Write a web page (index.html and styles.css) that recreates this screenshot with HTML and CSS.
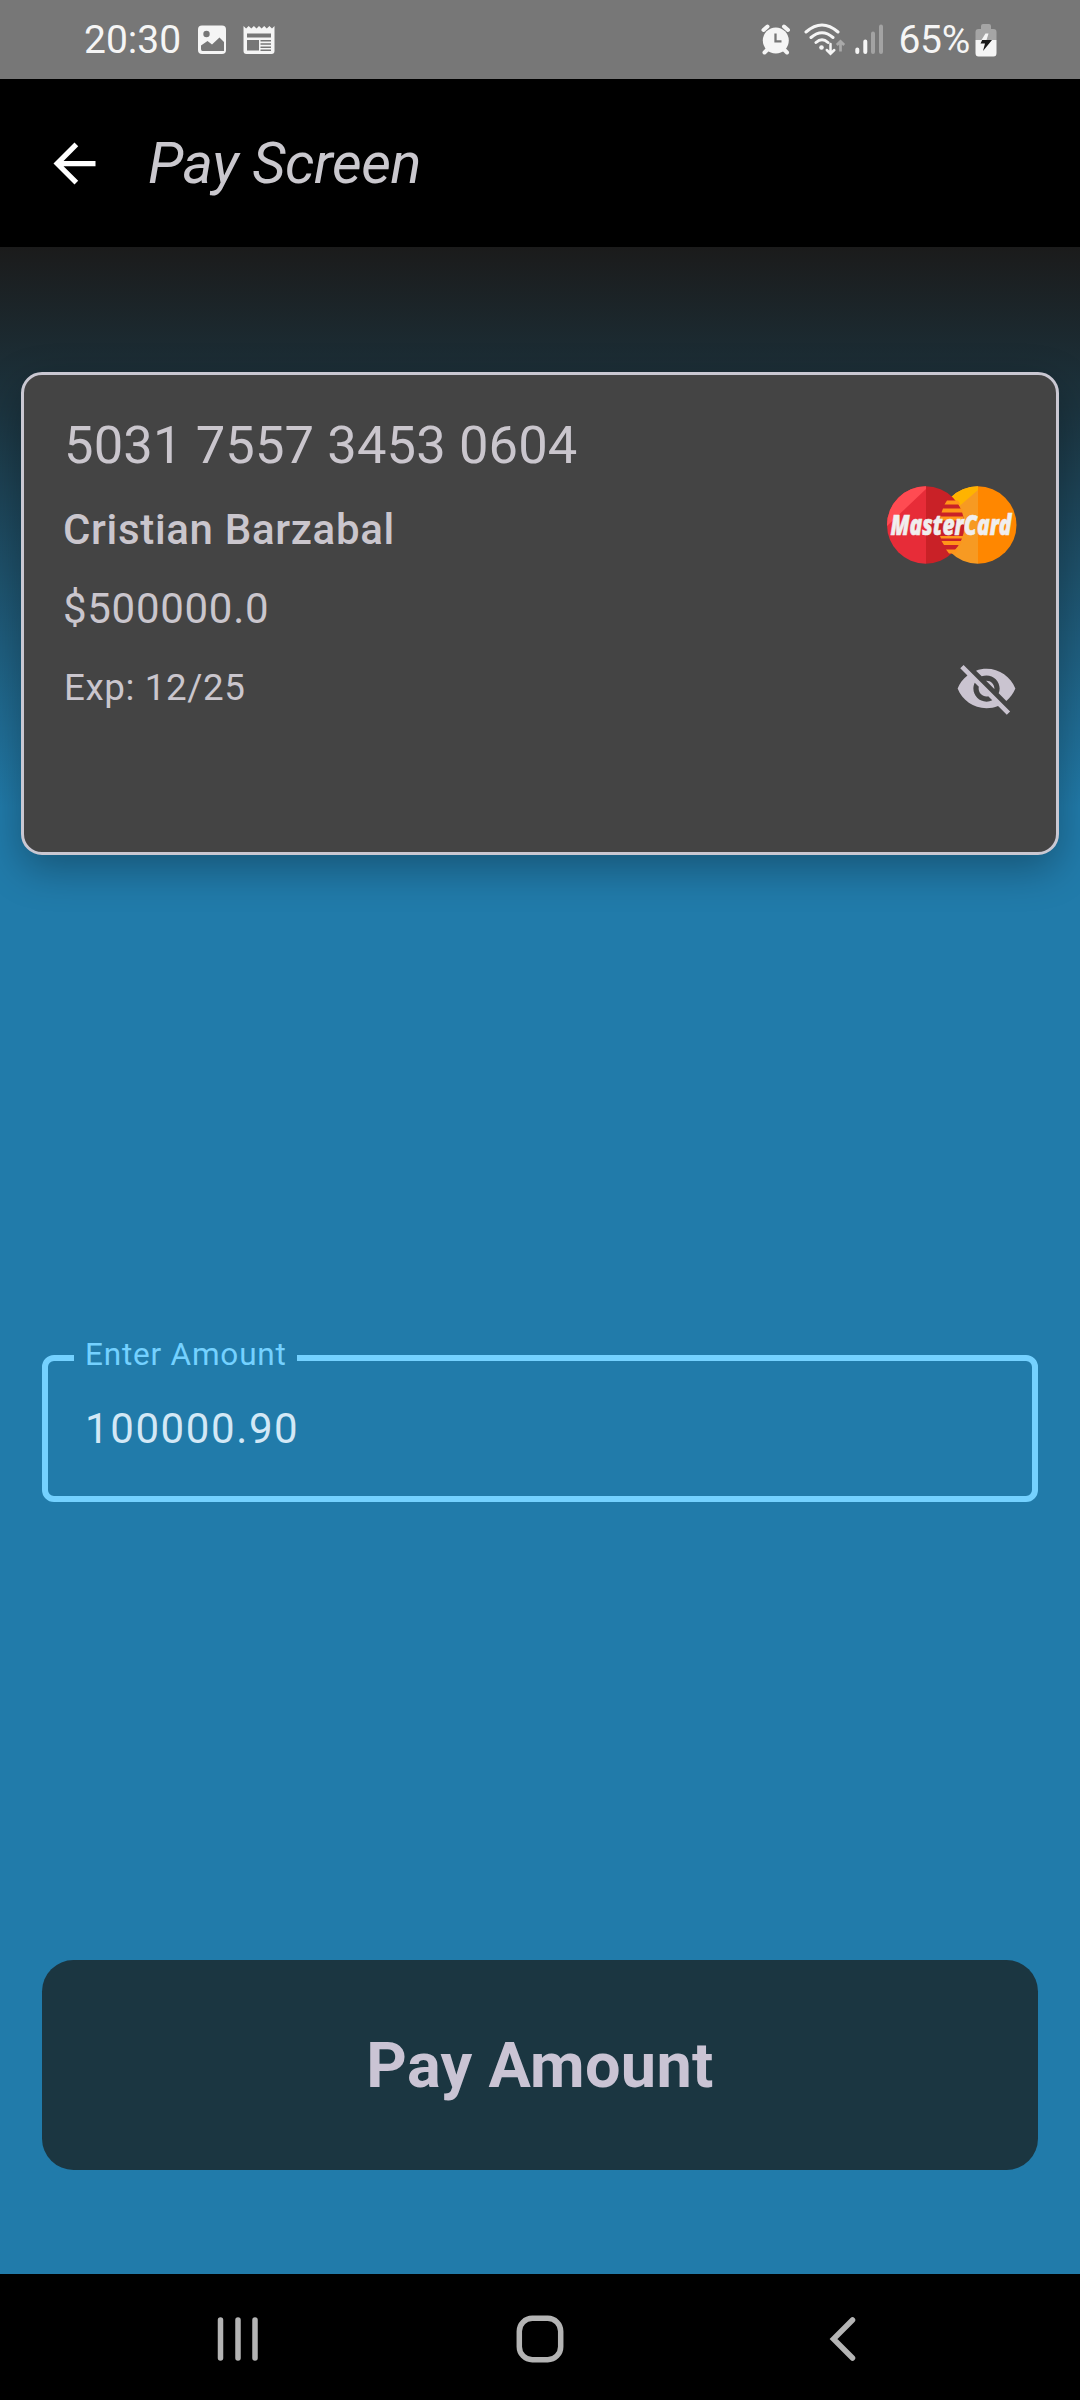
FILE: index.html
```html
<!DOCTYPE html>
<html lang="en">
<head>
<meta charset="utf-8">
<title>Pay Screen</title>
<link rel="stylesheet" href="styles.css">
</head>
<body>
<div class="screen">
  <div class="status">
    <div class="status-left">
      <span class="status-text">20:30</span>
      <svg class="ic-photo" width="30" height="30" viewBox="0 0 30 30"><rect x="1" y="0.5" width="28" height="28.5" rx="4" fill="#f5f5f5"/><circle cx="9.5" cy="9" r="3.2" fill="#777"/><path d="M4 20.500L10.500 16L15 19.500L22.500 12.500L27 17V26H5.500Q4 26 4 24Z" fill="#777"/></svg>
      <svg class="ic-news" width="32" height="30" viewBox="0 0 32 30"><path d="M.5 1l2.600 2.500 2.600-2.500 2.600 2.500 2.600-2.500 2.600 2.500 2.500-2.500 2.600 2.500 2.600-2.500 2.600 2.500 2.600-2.500 2.600 2.500L31.500 1V26q0 3-3 3h-25q-3 0-3-3z" fill="#f5f5f5"/><path d="M4 8.500h24v4H4zM4 15h12v10.500H4zM17.500 15h10.500v1.500H17.500zM17.500 18.300h10.500v1.500H17.500zM17.500 21.600h10.500v1.500H17.500zM17.500 24.600h10.500v1.300H17.500z" fill="#777"/></svg>
    </div>
    <div class="status-right">
      <svg width="30" height="32" viewBox="0 0 30 32"><g stroke="#f5f5f5" stroke-width="4" stroke-linecap="round"><path d="M2.500 6L6.500 2.500M27 6L23 2.500M3.500 28.500L7 25M26 28.500L22.500 25"/></g><circle cx="14.800" cy="16.500" r="13" fill="#f5f5f5"/><path d="M14.500 9.500V17.300H20.500" stroke="#777" stroke-width="2.300" fill="none"/></svg>
      <svg class="ic-wifi" width="42" height="33" viewBox="0 0 42 33"><g fill="none" stroke="#f5f5f5" stroke-width="3" stroke-linecap="round"><path d="M2 9Q18 -5 34 9M7 14.500Q18 5 29 14.500M12 19.500Q18 14 24 19.500"/><path d="M26.500 21V30M22.800 27L26.500 30.700L30.300 27" stroke-width="2.500"/></g><circle cx="17.500" cy="24.500" r="2.300" fill="#f5f5f5"/><path d="M36.500 28.500V19M32.800 22L36.500 18.300L40.200 22" fill="none" stroke="#a9a9a9" stroke-width="2.700"/></svg>
      <svg class="ic-signal" width="30" height="32" viewBox="0 0 30 32"><g stroke-width="4" stroke-linecap="round"><path d="M2.300 25.500V28M10.300 17.500V28" stroke="#f5f5f5"/><path d="M18 9.500V28M26 2.500V28" stroke="#a3a3a3"/></g></svg>
      <span class="status-text pct">65%</span>
      <svg width="22" height="34" viewBox="0 0 22 34"><path d="M6 6V3Q6 1 8 1H14Q16 1 16 3V6H18.500Q21.500 6 21.500 9V17H.5V9Q.5 6 3.500 6Z" fill="#a5a5a5"/><path d="M.5 17H21.500V30Q21.500 33.500 18.500 33.500H3.500Q.5 33.500 .5 30Z" fill="#f5f5f5"/><path d="M10.500 10.500H13.500L11.500 17H6.500Z" fill="#f5f5f5"/><path d="M11.500 17H17L8 28L10 20.500H5.500L7.200 17Z" fill="#1a1a1a"/></svg>
    </div>
  </div>
  <header class="topbar">
    <svg width="63" height="63" viewBox="0 0 24 24"><path d="M20 11H7.830l5.590-5.590L12 4l-8 8 8 8 1.410-1.410L7.830 13H20v-2z" fill="#fff"/></svg>
    <h1 class="title">Pay Screen</h1>
  </header>
  <main class="content">
    <section class="card">
      <div class="number">5031 7557 3453 0604</div>
      <div class="details">
        <div class="lines">
          <div class="name">Cristian Barzabal</div>
          <div class="balance">$500000.0</div>
          <div class="expiry">Exp: 12/25</div>
        </div>
        <div class="side">
          <svg class="brand" width="130" height="78" viewBox="0 0 130 78">
            <defs>
              <clipPath id="left"><circle cx="38.700" cy="39" r="38.700"/></clipPath>
              <clipPath id="right"><circle cx="90.800" cy="39" r="38.700"/></clipPath>
            </defs>
            <g clip-path="url(#right)"><path d="M50 0H91V78H50Z" fill="#f79a22"/><path d="M50 0H91V4L62 29L50 42Z" fill="#ffb300"/><path d="M91 0H130V78H91Z" fill="#ff8700"/></g>
            <g clip-path="url(#left)"><path d="M0 0H39V78H0Z" fill="#e72c38"/><path d="M0 0H39V3L0 40Z" fill="#ff4b52"/><path d="M39 0H80V78H39Z" fill="#c92127"/></g>
            <g fill="#ff9519"><path d="M60 14.500H71L73.500 18.500H57.500ZM56 22.500H75L76 26.500H54.500ZM53.500 30.500H76.500V34.500H53ZM53 50H77L76 52.500H54ZM54.500 55H75L73 59H57ZM59 63.500H71L68.500 67.500H62Z"/></g>
            <text class="brand-text" x="64" y="49" text-anchor="middle" textLength="121" lengthAdjust="spacingAndGlyphs">MasterCard</text>
          </svg>
          <svg class="eye" width="63" height="63" viewBox="0 0 24 24"><path d="M12 7c2.760 0 5 2.240 5 5 0 .65-.13 1.260-.36 1.830l2.920 2.920c1.510-1.260 2.700-2.890 3.430-4.750-1.730-4.390-6-7.500-11-7.500-1.400 0-2.740.25-3.980.7l2.160 2.160C10.740 7.130 11.350 7 12 7zM2 4.270l2.280 2.280.46.46C3.080 8.300 1.780 10.020 1 12c1.730 4.390 6 7.500 11 7.500 1.550 0 3.030-.3 4.380-.84l.42.42L19.730 22 21 20.730 3.270 3 2 4.270zM7.530 9.800l1.550 1.550c-.05.21-.08.43-.08.65 0 1.660 1.340 3 3 3 .22 0 .44-.03.65-.08l1.550 1.550c-.67.33-1.410.53-2.200.53-2.760 0-5-2.240-5-5 0-.79.2-1.530.53-2.200zm4.310-.78l3.150 3.150.02-.16c0-1.660-1.340-3-3-3l-.17.01z" fill="#cac4d0"/></svg>
        </div>
      </div>
    </section>
    <fieldset class="field">
      <legend>Enter Amount</legend>
      <div class="value">100000.90</div>
    </fieldset>
    <button class="pay">Pay Amount</button>
  </main>
  <nav class="nav">
    <svg width="42" height="44" viewBox="0 0 42 44"><path d="M3.500 3V41M21 3V41M38 3V41" stroke="#b4b4b4" stroke-width="5.500" stroke-linecap="round"/></svg>
    <svg width="48" height="48" viewBox="0 0 48 48"><rect x="3.300" y="3.300" width="41.400" height="41.400" rx="13" fill="none" stroke="#b4b4b4" stroke-width="5.500"/></svg>
    <svg width="42" height="44" viewBox="0 0 42 44"><path d="M30.500 3L11.500 22L30.500 41" fill="none" stroke="#b4b4b4" stroke-width="5.500" stroke-linecap="round"/></svg>
  </nav>
</div>
</body>
</html>
```
FILE: styles.css
```css
body { margin: 0; }
.screen {
  width: 1080px;
  height: 2400px;
  display: flex;
  flex-direction: column;
  font-family: Roboto, sans-serif;
  overflow: hidden;
}
.status {
  height: 79px;
  box-sizing: border-box;
  padding: 0 83px 0 84px;
  background: #777;
  display: flex;
  justify-content: space-between;
  align-items: center;
}
.status-left, .status-right { display: flex; align-items: center; }
.status-text {
  font-size: 39px;
  line-height: 46px;
  color: #f5f5f5;
}
.ic-photo { margin-left: 16px; }
.ic-news { margin-left: 16px; }
.ic-wifi { margin-left: 13px; }
.ic-signal { margin-left: 9px; }
.pct { margin: 0 5px 0 13px; letter-spacing: -0.3px; }
.topbar {
  height: 168px;
  background: #000;
  display: flex;
  align-items: center;
  padding-left: 43px;
  gap: 42px;
}
.title {
  margin: 0;
  font-size: 57.75px;
  font-weight: 400;
  font-style: italic;
  line-height: 74px;
  letter-spacing: -0.4px;
  color: #cac8ce;
}
.content {
  height: 2027px;
  box-sizing: border-box;
  padding: 125px 21px 104px;
  display: flex;
  flex-direction: column;
  background: linear-gradient(#1b1b1b 0, #1c343f 160px, #217baa 560px);
}
.card {
  height: 483px;
  box-sizing: border-box;
  border: 3px solid #cac8d2;
  border-radius: 21px;
  padding: 36px 39px;
  background: #444;
  box-shadow: 0 14px 42px rgba(0, 0, 0, 0.3);
  color: #cac6cd;
}
.number { font-size: 52.5px; line-height: 68px; letter-spacing: 0.12px; padding-left: 1px; }
.details { display: flex; justify-content: space-between; }
.lines { display: flex; flex-direction: column; padding-top: 19px; }
.name { font-size: 42px; line-height: 63px; font-weight: 500; letter-spacing: 0.67px; }
.balance { font-size: 42px; line-height: 63px; letter-spacing: 0.7px; margin-top: 16px; }
.expiry { font-size: 36.75px; line-height: 53px; letter-spacing: 0.6px; margin-top: 21px; padding-left: 1px; }
.side { display: flex; flex-direction: column; align-items: flex-end; padding-top: 7px; }
.brand { overflow: visible; }
.brand-text {
  font-family: "Open Sans", sans-serif;
  font-size: 28px;
  font-weight: 800;
  font-style: italic;
  fill: #f0eeee;
  stroke: #f0eeee;
  stroke-width: 0.6px;
}
.eye { margin: 93px -1px 0 0; }
.field {
  margin: 481px 21px 0;
  height: 166px;
  box-sizing: border-box;
  border: 6px solid #74d1ff;
  border-radius: 12px;
  padding: 0 36px;
}
.field legend {
  height: 44px;
  margin-left: -10px;
  padding: 0 10px 0 11px;
  font-size: 31.5px;
  line-height: 38px;
  letter-spacing: 0.8px;
  color: #74d1ff;
}
.value { margin-top: 17px; padding-left: 1px; font-size: 42px; line-height: 63px; letter-spacing: 1.6px; color: #d3e8f6; }
.pay {
  margin: auto 21px 0;
  height: 210px;
  border: 0;
  border-radius: 31.5px;
  background: #1b3641;
  color: #cac4d4;
  font-family: inherit;
  font-size: 63px;
  font-weight: 700;
  letter-spacing: 0.3px;
}
.nav {
  flex: 1;
  background: #000;
  display: grid;
  grid-template-columns: repeat(3, 302.5px);
  justify-content: center;
  justify-items: center;
  align-items: center;
  padding-top: 4px;
}
```
